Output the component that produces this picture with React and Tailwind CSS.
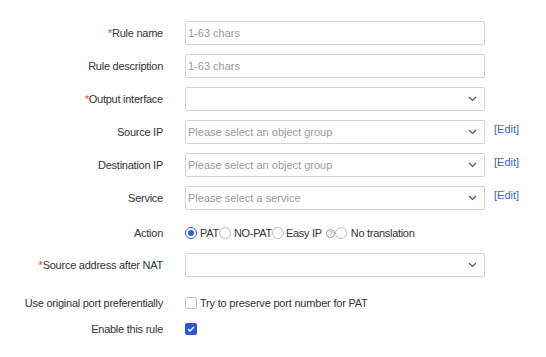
import React from 'react';

const FONT = { fontFamily: '"Liberation Sans", Arial, sans-serif' };

function Chevron() {
  return (
    <svg width="9" height="6" viewBox="0 0 9 6" className="absolute right-[7px] top-1/2 -translate-y-1/2">
      <path d="M1 1l3.5 3.5L8 1" fill="none" stroke="#555" strokeWidth="1.2" />
    </svg>
  );
}

function Label({ req, children }) {
  return (
    <div className="w-[163px] mr-[22px] shrink-0 text-right text-[11px] tracking-[-0.25px] text-[#333]">
      {req && <span className="text-[#e0474c]">*</span>}
      {children}
    </div>
  );
}

function Box({ placeholder, select }) {
  return (
    <div className="relative w-[300px] h-[24px] border border-[#d4d4d4] rounded-[2px] bg-white flex items-center pl-[2px]">
      <span className="text-[11px] text-[#9a9a9a]">{placeholder}</span>
      {select && <Chevron />}
    </div>
  );
}

function Edit() {
  return <span className="self-start mt-[1px] ml-[9px] text-[11px] text-[#3b63d4]">[Edit]</span>;
}

function Radio({ on }) {
  return (
    <span className={`inline-block shrink-0 w-[12px] h-[12px] rounded-full border bg-white relative ${on ? 'border-[#2f5ce0]' : 'border-[#bdbdbd]'}`}>
      {on && <span className="absolute left-[2px] top-[2px] w-[6px] h-[6px] rounded-full bg-[#2f5ce0]" />}
    </span>
  );
}

const marks = [
  [68, -4], [68, 56], [68, 116], [68, 178], [68, 243], [68, 304],
  [406, -4], [406, 56], [406, 120], [406, 188], [406, 243], [406, 306],
];

export default function App() {
  return (
    <div className="relative w-[546px] h-[357px] bg-white overflow-hidden" style={FONT}>
      <div className="pt-[21px]">
        <div className="flex items-center h-[24px]">
          <Label req>Rule name</Label>
          <Box placeholder="1-63 chars" />
        </div>
        <div className="flex items-center h-[24px] mt-[9px]">
          <Label>Rule description</Label>
          <Box placeholder="1-63 chars" />
        </div>
        <div className="flex items-center h-[24px] mt-[9px]">
          <Label req>Output interface</Label>
          <Box select />
        </div>
        <div className="flex items-center h-[24px] mt-[9px]">
          <Label>Source IP</Label>
          <Box select placeholder="Please select an object group" />
          <Edit />
        </div>
        <div className="flex items-center h-[24px] mt-[9px]">
          <Label>Destination IP</Label>
          <Box select placeholder="Please select an object group" />
          <Edit />
        </div>
        <div className="flex items-center h-[24px] mt-[9px]">
          <Label>Service</Label>
          <Box select placeholder="Please select a service" />
          <Edit />
        </div>
        <div className="flex items-center h-[24px] mt-[11px]">
          <Label>Action</Label>
          <div className="flex items-center text-[11px] tracking-[-0.3px] text-[#333]">
            <Radio on />
            <span className="ml-[3px]">PAT</span>
            <Radio />
            <span className="ml-[3px]">NO-PAT</span>
            <Radio />
            <span className="ml-[2px]">Easy IP</span>
            <span className="ml-[4px] w-[9px] h-[9px] rounded-full border border-[#999] text-[7px] leading-[7px] text-[#888] flex items-center justify-center">?</span>
            <Radio />
            <span className="ml-[4px]">No translation</span>
          </div>
        </div>
        <div className="flex items-center h-[24px] mt-[8px]">
          <Label req>Source address after NAT</Label>
          <Box select />
        </div>
        <div className="flex items-center h-[24px] mt-[14px]">
          <Label>Use original port preferentially</Label>
          <div className="flex items-center text-[11px] tracking-[-0.2px] text-[#333]">
            <span className="w-[12px] h-[12px] border border-[#c4c4c4] rounded-[2px] bg-white" />
            <span className="ml-[3px]">Try to preserve port number for PAT</span>
          </div>
        </div>
        <div className="flex items-center h-[20px] mt-[4px]">
          <Label>Enable this rule</Label>
          <span className="w-[12px] h-[12px] rounded-[2px] bg-[#2f55d4] flex items-center justify-center">
            <svg width="8" height="6" viewBox="0 0 8 6">
              <path d="M1 3l2 2 4-4" fill="none" stroke="#fff" strokeWidth="1.4" />
            </svg>
          </span>
        </div>
      </div>
      <div className="absolute inset-0 pointer-events-none">
        {marks.map(([x, y], i) => (
          <div key={i} className="absolute text-[20px] leading-[20px] text-black/[0.025]" style={{ left: x, top: y }}>
            <div>tys4981</div>
            <div>H3C</div>
          </div>
        ))}
      </div>
    </div>
  );
}
